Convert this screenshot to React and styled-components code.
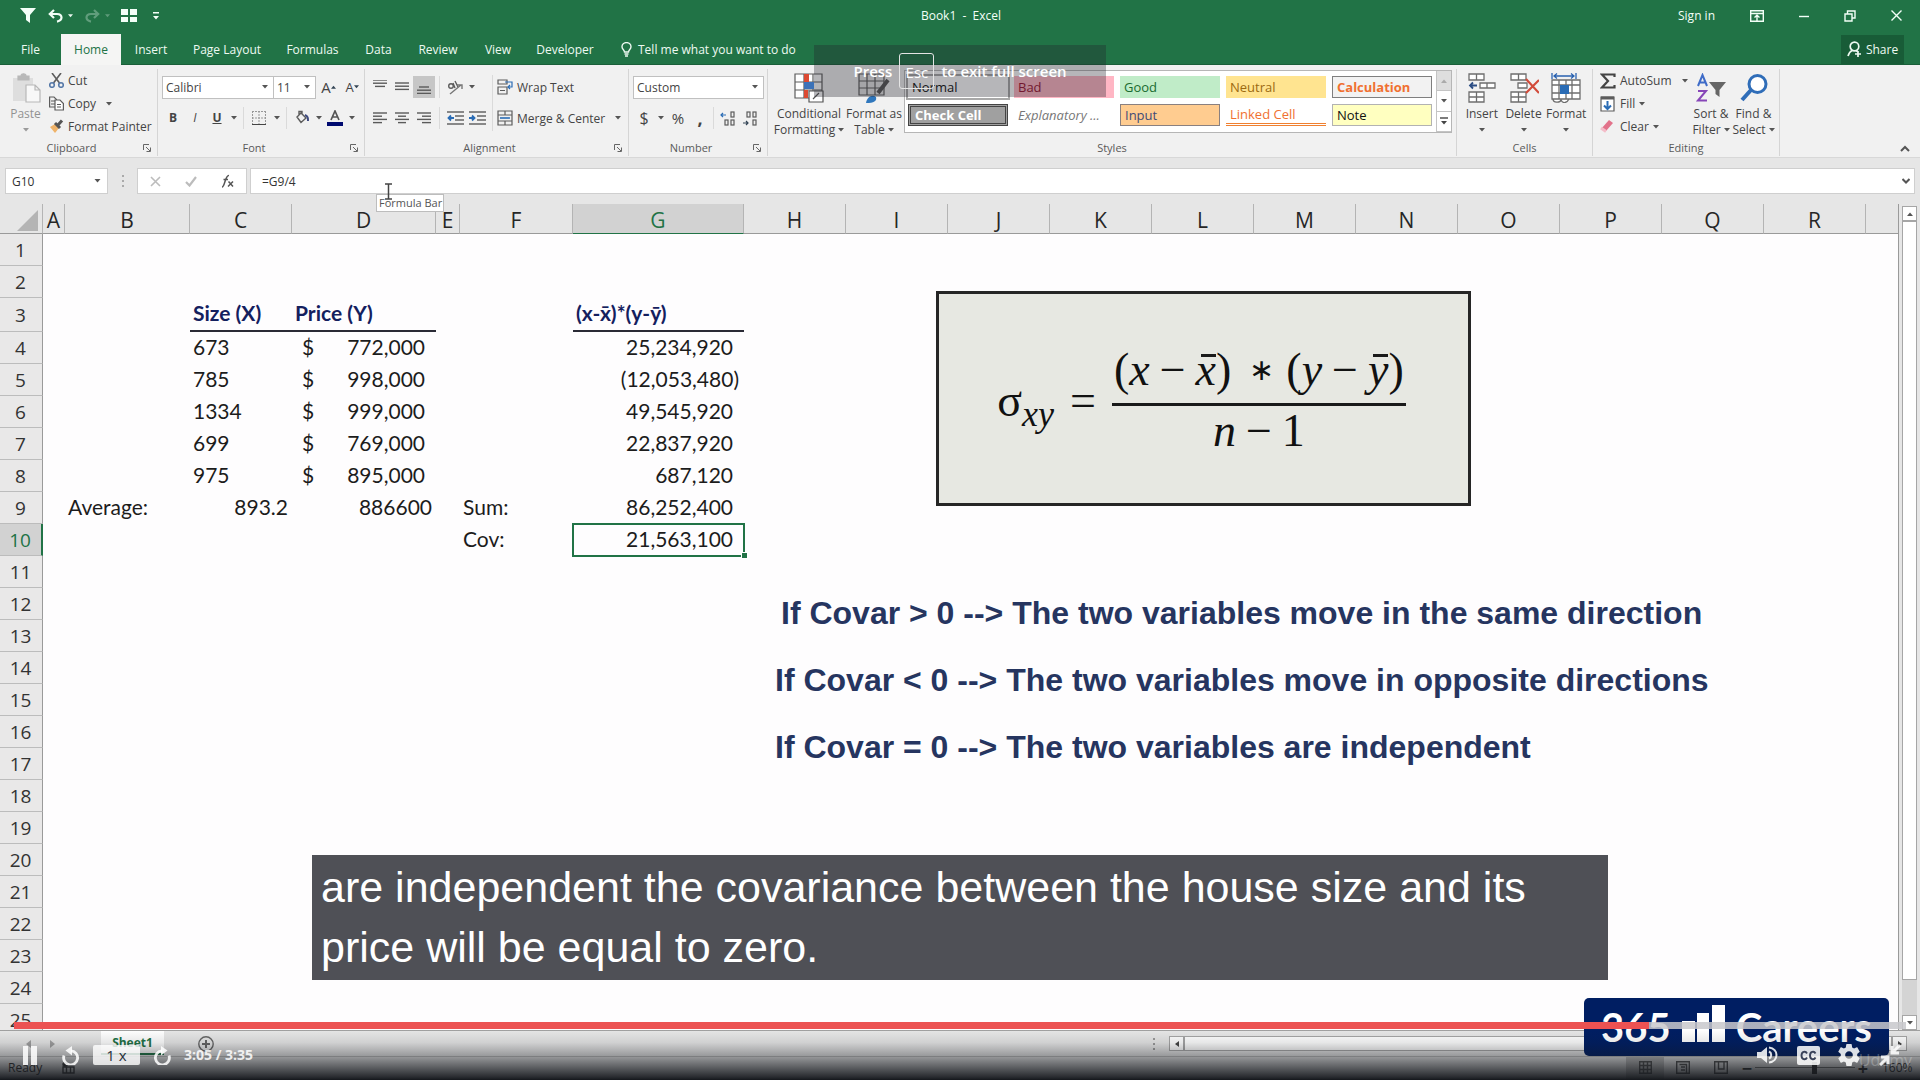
import React from "react";
import styled, { createGlobalStyle, css } from "styled-components";

const GREEN = "#217346";
const UI = '"Open Sans", "Noto Sans", sans-serif';
const CELL = 'Lato, "Open Sans", sans-serif';

const Global = createGlobalStyle`
  * { box-sizing: border-box; }
  html, body { margin: 0; height: 100%; overflow: hidden; }
  body { font-family: ${UI}; font-size: 12px; color: #444; background: #e6e6e6; }
  #root { height: 100%; }
  button, select, input { font: inherit; color: inherit; margin: 0; padding: 0; }
  button { background: none; border: 0; white-space: nowrap; cursor: pointer; }
  a { color: inherit; text-decoration: none; }
  svg { display: block; flex: none; }
`;

/* ---------- Window frame ---------- */
const Screen = styled.div`
  position: relative;
  display: flex;
  flex-direction: column;
  height: 100vh;
  overflow: hidden;
`;
const TitleBar = styled.header`
  display: grid;
  grid-template-columns: 1fr auto 1fr;
  align-items: center;
  height: 34px;
  padding: 0 18px 3px 20px;
  background: ${GREEN};
  color: #f3fff8;
`;
const QuickAccess = styled.div`
  display: flex;
  align-items: center;
  gap: 11px;
`;
const QuickPair = styled.div`
  display: flex;
  align-items: center;
  gap: 5px;
  opacity: ${(p) => (p.$dim ? 0.3 : 1)};
`;
const QuickButton = styled.button`
  display: flex;
  align-items: center;
  justify-content: center;
  min-width: 16px;
`;
const WindowTools = styled.div`
  display: flex;
  align-items: center;
  justify-content: flex-end;
  gap: 35px;
`;
const Tabs = styled.nav`
  display: flex;
  align-items: stretch;
  height: 31px;
  padding-right: 16px;
  background: ${GREEN};
  border-bottom: 1px solid #1a5f39;
  color: #eefaf2;
`;
const Tab = styled.a`
  display: flex;
  align-items: center;
  justify-content: center;
  width: ${(p) => p.$w}px;
  white-space: nowrap;
  ${(p) => p.$active && css`
    background: #f5f5f4;
    color: ${GREEN};
    margin-bottom: -1px;
  `}
`;
const TellMe = styled.button`
  display: flex;
  align-items: center;
  gap: 6px;
  padding-left: 16px;
`;
const Share = styled.button`
  display: flex;
  align-items: center;
  justify-content: center;
  gap: 4px;
  width: 63px;
  margin: 1px 0 0 auto;
  background: #185c37;
`;

/* ---------- Ribbon ---------- */
const Ribbon = styled.section`
  display: flex;
  height: 93px;
  padding: 4px 0 1px;
  background: #f1f1f1;
  border-bottom: 1px solid #d8d8d8;
`;
const Group = styled.section`
  display: flex;
  flex-direction: column;
  width: ${(p) => p.$w}px;
  border-right: 1px solid #d5d5d5;
`;
const GroupBody = styled.div`
  display: flex;
  flex: 1;
  padding: 0 ${(p) => p.$pr ?? 4}px 0 ${(p) => p.$pl ?? 4}px;
  gap: ${(p) => p.$gap ?? 0}px;
`;
const GroupFoot = styled.footer`
  display: grid;
  grid-template-columns: ${(p) => (p.$launch ? "1fr 14px" : "1fr")};
  align-items: center;
  height: 16px;
  font-size: 11px;
  line-height: 16px;
  text-align: center;
  color: #5a5a5a;
`;
const Rows = styled.div`
  display: flex;
  flex-direction: column;
  flex: ${(p) => (p.$grow ? 1 : "none")};
  padding-top: ${(p) => p.$top ?? 0}px;
  gap: ${(p) => p.$gap ?? 0}px;
`;
const Line = styled.div`
  display: flex;
  align-items: center;
  height: 22px;
`;
const Tool = styled.button`
  display: flex;
  align-items: center;
  justify-content: center;
  width: ${(p) => p.$w ?? 22}px;
  height: 22px;
  background: ${(p) => (p.$on ? "#c6c6c6" : "none")};
  font-size: ${(p) => p.$size ?? 12}px;
  font-weight: ${(p) => (p.$bold ? 700 : 400)};
  font-style: ${(p) => (p.$italic ? "italic" : "normal")};
  text-decoration: ${(p) => (p.$under ? "underline" : "none")};
  line-height: 22px;
`;
const TextTool = styled.button`
  display: flex;
  align-items: center;
  gap: 4px;
  height: ${(p) => p.$h ?? 23}px;
`;
const Divider = styled.i`
  width: 1px;
  height: ${(p) => p.$h ?? 22}px;
  margin: ${(p) => p.$mt ?? 0}px ${(p) => p.$m ?? 2}px 0;
  background: #dadada;
`;
const BigTool = styled.button`
  display: flex;
  flex-direction: column;
  align-items: center;
  width: ${(p) => p.$w}px;
  line-height: 16px;
  opacity: ${(p) => (p.$dim ? 0.55 : 1)};
`;
const BigIcon = styled.span`
  display: flex;
  align-items: center;
  justify-content: center;
  height: 37px;
`;
const BigLine = styled.span`
  display: flex;
  align-items: center;
  justify-content: center;
  gap: 3px;
  height: 16px;
`;
const Picker = styled.label`
  display: flex;
  align-items: center;
  width: ${(p) => p.$w}px;
  height: 23px;
  padding-right: 5px;
  margin-left: ${(p) => (p.$join ? -1 : 0)}px;
  background: #fff;
  border: 1px solid #c0c0c0;
  select {
    flex: 1;
    min-width: 0;
    padding-left: 3px;
    border: 0;
    background: none;
    appearance: none;
    outline: 0;
  }
`;
const Gallery = styled.div`
  display: flex;
  height: 63px;
  margin: 1px 0 0 0;
  background: #fff;
  border: 1px solid #b6b6b6;
`;
const Swatches = styled.div`
  display: grid;
  grid-template-columns: repeat(5, 100px);
  grid-auto-rows: 22px;
  gap: 6px;
  padding: 5px 4px 5px 3px;
`;
const Swatch = styled.button`
  padding-left: 4px;
  text-align: left;
  line-height: 16px;
  font-size: 13px;
  background: ${(p) => p.$bg ?? "#fff"};
  color: ${(p) => p.$fg ?? "#111"};
  border: ${(p) => p.$bd ?? "0"};
  font-weight: ${(p) => (p.$bold ? 700 : 400)};
  font-style: ${(p) => (p.$italic ? "italic" : "normal")};
  outline: ${(p) => (p.$current ? "2px solid #a8a8a8" : "0")};
  ${(p) => p.$under && css`border-bottom: 3px double #f08030;`}
`;
const GalleryScroll = styled.div`
  display: grid;
  grid-template-rows: repeat(3, 1fr);
  width: 15px;
  button {
    display: flex;
    align-items: center;
    justify-content: center;
    border: 1px solid #c4c4c4;
    border-width: 0 0 1px 1px;
  }
  button:first-child { background: #dedede; }
`;
const RibbonEnd = styled.div`
  display: flex;
  flex: 1;
  align-items: flex-end;
  justify-content: flex-end;
  padding: 0 10px 4px 0;
`;

/* ---------- Formula bar ---------- */
const FormulaRow = styled.div`
  display: flex;
  align-items: stretch;
  height: 46px;
  padding: 10px 5px 10px 5px;
  background: #e6e6e6;
`;
const Box = styled.div`
  display: flex;
  align-items: center;
  background: #fff;
  border: 1px solid #cfcfcf;
  width: ${(p) => (p.$w ? p.$w + "px" : "auto")};
  flex: ${(p) => (p.$w ? "none" : 1)};
  padding: 0 ${(p) => p.$pr ?? p.$px ?? 6}px 0 ${(p) => p.$px ?? 6}px;
  justify-content: ${(p) => (p.$spread ? "space-between" : "normal")};
  input {
    flex: 1;
    min-width: 0;
    border: 0;
    background: none;
    outline: 0;
    color: #333;
  }
`;
const Grip = styled.div`
  display: flex;
  align-items: center;
  justify-content: center;
  width: ${(p) => p.$w}px;
`;

/* ---------- Sheet ---------- */
const SheetArea = styled.main`
  position: relative;
  display: flex;
  flex: 1;
  min-height: 0;
  overflow: hidden;
`;
const Viewport = styled.div`
  flex: 1;
  min-width: 0;
  overflow: hidden;
  background: #fefdfe;
  border-right: 1px solid #9a9a9a;
`;
const Grid = styled.table`
  width: 100%;
  table-layout: fixed;
  border-collapse: separate;
  border-spacing: 0;
  font-family: ${CELL};
  font-size: 21px;
  line-height: 26px;
  color: #1c1c1c;
  th, td { padding: 0; white-space: nowrap; }
`;
const ColHead = styled.th`
  height: 30px;
  && { padding-top: 3px; }
  font: 400 21px/26px ${UI};
  color: ${(p) => (p.$on ? GREEN : "#262626")};
  background: ${(p) => (p.$on ? "#d2d2d2" : "#e6e6e6")};
  border-right: 1px solid #b4b4b4;
  border-bottom: 1px solid ${(p) => (p.$on ? GREEN : "#9a9a9a")};
  &:last-child { border-right: 0; }
  svg { margin-left: auto; margin-right: 4px; }
`;
const RowHead = styled.th`
  height: ${(p) => p.$h}px;
  && { padding-right: 1px; }
  font: 400 19px/28px ${UI};
  color: ${(p) => (p.$on ? GREEN : "#333")};
  background: ${(p) => (p.$on ? "#d2d2d2" : "#e9e8e8")};
  border-right: ${(p) => (p.$on ? `2px solid ${GREEN}` : "1px solid #9a9a9a")};
  border-bottom: 1px solid #bcbcbc;
`;
const Cell = styled.td`
  position: relative;
  && { padding: ${(p) => (p.$kind === "number" ? "0 11px 2px 3px" : p.$kind === "paren" ? "0 5px 2px 3px" : "0 4px 2px 3px")}; }
  text-align: ${(p) => (p.$kind ? "right" : "left")};
  ${(p) => p.$head && css`
    font-weight: 700;
    color: #14205e;
    border-bottom: 2px solid #2a2a35;
  `}
  ${(p) => p.$active && css`
    outline: 2px solid ${GREEN};
    outline-offset: -1px;
    &::after {
      content: "";
      position: absolute;
      right: -3px;
      bottom: -2px;
      width: 5px;
      height: 5px;
      background: ${GREEN};
      outline: 1px solid #fff;
    }
  `}
`;
const Money = styled.span`
  display: flex;
  justify-content: space-between;
  padding-left: 7px;
`;
const VScroll = styled.div`
  display: flex;
  flex-direction: column;
  width: 21px;
  padding: 2px 3px 0;
  background: #e6e6e6;
`;
const ScrollButton = styled.button`
  display: flex;
  align-items: center;
  justify-content: center;
  width: 15px;
  height: 15px;
  flex: none;
  background: #fff;
  border: 1px solid #a6a6a6;
`;
const VTrack = styled.div`
  flex: 1;
  padding-bottom: 35px;
  background: #d4d4d4;
`;
const Thumb = styled.div`
  flex: 1;
  height: 100%;
  background: #fff;
  border: 1px solid #a6a6a6;
`;

/* ---------- Drawing objects on the sheet ---------- */
const EquationBox = styled.figure`
  position: absolute;
  left: 936px;
  top: 87px;
  display: flex;
  align-items: center;
  justify-content: center;
  gap: 16px;
  width: 535px;
  height: 215px;
  margin: 0;
  padding: 4px 4px 0 0;
  background: #e7e8e2;
  border: 3px solid #262626;
  font: 46px/50px "Liberation Serif", serif;
  color: #111;
`;
const Sigma = styled.span`
  sub {
    font-size: 36px;
    line-height: 20px;
    font-style: italic;
    vertical-align: -10px;
  }
`;
const Fraction = styled.span`
  display: flex;
  flex-direction: column;
  align-items: center;
`;
const Numerator = styled.span`
  display: flex;
  gap: 12px;
  padding: 0 2px 8px;
  border-bottom: 3px solid #1a1a1a;
`;
const Barred = styled.i`
  position: relative;
  &::before {
    content: "";
    position: absolute;
    left: 5px;
    right: 0;
    top: 9px;
    height: 3px;
    background: #1a1a1a;
  }
`;
const Term = styled.span`
  display: flex;
`;
const Star = styled.span`
  padding-left: 6px;
  font-size: 30px;
`;
const Op = styled.span`
  padding: 0 10px;
`;
const Notes = styled.div`
  position: absolute;
  left: 775px;
  top: 376px;
  font: 700 32px/67px "Liberation Sans", Arial, sans-serif;
  color: #263560;
  white-space: nowrap;
  p { margin: 0; }
  p:first-child { padding-left: 6px; }
`;

/* ---------- Bottom bars ---------- */
const SheetTabs = styled.div`
  display: flex;
  align-items: center;
  height: 27px;
  background: #e6e6e6;
  border-top: 1px solid #a0a0a0;
  border-bottom: 1px solid #bdbdbd;
`;
const SheetNav = styled.div`
  display: flex;
  width: 101px;
  padding-left: 26px;
  gap: 19px;
  color: #a0a0a0;
`;
const SheetTab = styled.button`
  align-self: flex-start;
  width: 63px;
  height: 24px;
  font-weight: 700;
  color: ${GREEN};
  background: #fff;
  border-bottom: 2px solid ${GREEN};
`;
const AddSheet = styled.button`
  padding-left: 34px;
`;
const HScroll = styled.div`
  display: flex;
  width: 738px;
  height: 15px;
  margin-right: 13px;
`;
const StatusBar = styled.footer`
  display: flex;
  align-items: center;
  height: 23px;
  padding: 0 8px 2px;
  gap: 20px;
  background: #e6e6e6;
  color: #333;
`;
const StatusRight = styled.div`
  display: flex;
  align-items: center;
  margin-left: auto;
  height: 100%;
`;
const ViewButton = styled.button`
  display: flex;
  align-items: center;
  justify-content: center;
  width: 38px;
  height: 22px;
  background: ${(p) => (p.$on ? "#bdbdbd" : "none")};
`;
const ZoomButton = styled.button`
  width: 14px;
  font-size: 18px;
  line-height: 18px;
  font-weight: 700;
`;
const ZoomRange = styled.input`
  width: 100px;
  height: 12px;
  margin: 0 1px;
  appearance: none;
  background: linear-gradient(#777, #777) center / 100% 1px no-repeat;
  &::-webkit-slider-thumb {
    appearance: none;
    width: 5px;
    height: 12px;
    background: #333;
  }
`;
const ZoomText = styled.span`
  width: 42px;
  padding-left: 12px;
  white-space: nowrap;
`;

/* ---------- Overlays ---------- */
const Toast = styled.div`
  position: absolute;
  left: 50%;
  top: 45px;
  display: flex;
  align-items: center;
  justify-content: center;
  gap: 7px;
  width: 292px;
  height: 52px;
  margin-left: -146px;
  background: rgba(34, 34, 42, 0.33);
  color: #fff;
  font: 600 15px/20px ${UI};
  kbd {
    width: 35px;
    height: 36px;
    border: 1px solid #e4e4e4;
    border-radius: 3px;
    font: 400 15px/36px ${UI};
    text-align: center;
  }
`;
const Tip = styled.div`
  position: absolute;
  left: 376px;
  top: 194px;
  width: 68px;
  height: 18px;
  padding-left: 2px;
  overflow: hidden;
  background: #fff;
  border: 1px solid #bdbdbd;
  font-size: 11px;
  line-height: 16px;
  white-space: nowrap;
  color: #555;
`;
const Pointer = styled.svg`
  position: absolute;
  left: 384px;
  top: 183px;
`;
const Caption = styled.p`
  position: absolute;
  left: 312px;
  right: 312px;
  bottom: 100px;
  margin: 0;
  padding: 2px 9px 3px;
  background: rgba(66, 67, 73, 0.93);
  color: #fff;
  font: 43px/60px "Liberation Sans", Arial, sans-serif;
`;
const Brand = styled.div`
  position: absolute;
  right: 31px;
  bottom: 24px;
  display: flex;
  align-items: center;
  justify-content: center;
  gap: 11px;
  width: 305px;
  height: 58px;
  background: #001e62;
  border-radius: 5px;
  color: #fff;
  font: 700 40px/58px Lato, sans-serif;
  svg { margin-bottom: 8px; }
`;
const Player = styled.div`
  position: absolute;
  left: 0;
  right: 0;
  bottom: 0;
  height: 58px;
`;
const Shade = styled.div`
  position: absolute;
  inset: 8px 0 0;
  background: linear-gradient(rgba(20, 23, 28, 0), rgba(20, 23, 28, 0.1) 25%, rgba(20, 23, 28, 0.4) 55%, rgba(20, 23, 28, 0.9) 94%, rgb(20, 23, 28));
`;
const Seek = styled.input`
  position: relative;
  display: block;
  width: calc(100% - 28px);
  height: 7px;
  margin: 0 14px !important;
  appearance: none;
  background: linear-gradient(90deg, #ec5252 ${(p) => p.$at}%, rgba(200, 200, 204, 0.85) ${(p) => p.$at}%);
  &::-webkit-slider-thumb {
    appearance: none;
    width: 1px;
    height: 7px;
    background: transparent;
  }
`;
const Controls = styled.div`
  position: relative;
  display: flex;
  align-items: center;
  height: 51px;
  padding: 14px 18px 13px 23px;
  color: rgba(255, 255, 255, 0.86);
  font: 700 14px/20px ${UI};
`;
const PlayerLeft = styled.div`
  display: flex;
  align-items: center;
  gap: 13px;
`;
const PlayerRight = styled.div`
  display: flex;
  align-items: center;
  gap: 17px;
  margin-left: auto;
`;
const IconButton = styled.button`
  display: flex;
  width: ${(p) => p.$w}px;
  justify-content: center;
  margin-right: ${(p) => p.$mr ?? 0}px;
`;
const Speed = styled.button`
  width: 47px;
  height: 20px;
  border-radius: 2px;
  background: rgba(255, 255, 255, 0.8);
  color: #29303b;
  font: 400 15px/18px ${UI};
`;
const Watermark = styled.span`
  position: absolute;
  right: 8px;
  bottom: 10px;
  font-size: 16px;
  line-height: 20px;
  color: rgba(255, 255, 255, 0.25);
`;

/* ---------- Icons ---------- */
const Caret = ({ up, c = "#555", w = 6 }) => (
  <svg width={w} height="4" viewBox="0 0 6 4"><path d={up ? "M0 4L3 0.5L6 4z" : "M0 0L3 3.5L6 0z"} fill={c} /></svg>
);
const Svg = ({ w = 16, h, vb, c = "#5c5c5c", sw = 1.4, children }) => (
  <svg width={w} height={h ?? w} viewBox={vb ?? `0 0 ${w} ${h ?? w}`} fill="none" stroke={c} strokeWidth={sw}>{children}</svg>
);
const Launcher = () => (
  <Svg w={8} c="#666" sw={1}><path d="M.5 6V.5H6M3 3l4 4M7.500 3.500v4h-4" /></Svg>
);
const AlignIcon = ({ rows, y = 0 }) => (
  <Svg w={14} c="#5a5a5a" sw={1.4}>
    {rows.map(([x1, x2], i) => <path key={i} d={`M${x1} ${y + 2 + i * 3.2}H${x2}`} />)}
  </Svg>
);
const IndentIcon = ({ right }) => (
  <Svg w={17} h={14} c="#666" sw={1.3}>
    <path d="M0 1H17M8 5H17M8 9H17M0 13H17" />
    <path d={right ? "M0 7H5M3 4.500L5.500 7L3 9.500" : "M1.500 7H7M4 4.500L1.500 7L4 9.500"} stroke="#2a6cb5" strokeWidth="1.800" />
  </Svg>
);
const Undo = ({ flip }) => (
  <svg width="15" height="14" viewBox="0 0 15 14" fill="none" stroke="currentColor" strokeWidth="2.200">
    <g transform={flip ? "translate(15 0) scale(-1 1)" : undefined}>
      <path d="M6 1L1.800 5L6 9M2 5H9C12 5 13.500 6.500 13.500 8.600C13.500 11 12 12 9 12.600" />
    </g>
  </svg>
);
const CellBlocks = ({ kind }) => (
  <Svg w={30} h={30} c="#6e6e6e" sw={1.3}>
    {kind === "format" ? (
      <>
        <path d="M1 7H29V26H1zM1 12H29M1 20H29M8 7V26M21 7V26M15 7V26M2 26c0 4 7 4 8 1c2 4 6 3 8-1" fill="#fff" />
        <rect x="9" y="12" width="9" height="9" fill="#2a6cb5" stroke="none" />
        <path d="M1 0V6M25 0V6M3 3H23M6 0.500L3 3L6 5.500M20 .5L23 3L20 5.500" stroke="#2a62b0" />
      </>
    ) : (
      <>
        <path d="M2 1H17V7H2zM9.500 1V7M2 19H17V29H2zM9.500 19V29M2 24H17" fill="#fff" />
        {kind === "insert" ? (
          <>
            <path d="M13 10H28V15H13zM20 10V15" fill="#fff" />
            <path d="M10 12.500H3M6 9.500L3 12.500L6 15.500" stroke="#2b4d84" strokeWidth="1.800" />
          </>
        ) : (
          <>
            <path d="M9 10H18V15H9z" fill="#fff" />
            <path d="M17 6L30 20M30 7L17 20" stroke="#d24b3a" strokeWidth="2.200" />
          </>
        )}
      </>
    )}
  </Svg>
);
const Rotate = ({ flip }) => (
  <svg width="18" height="20" viewBox="0 0 18 20">
    <g transform={flip ? "translate(18 0) scale(-1 1)" : undefined}>
      <path d="M2 10.500A7 7 0 1 0 9 5.800" fill="none" stroke="currentColor" strokeWidth="2.800" />
      <path d="M10 1V10.500L3.500 5.500z" fill="currentColor" />
    </g>
  </svg>
);

/* ---------- Data ---------- */
const columns = [
  ["A", 22], ["B", 125], ["C", 102], ["D", 144], ["E", 24], ["F", 113], ["G", 171],
  ["H", 102], ["I", 102], ["J", 102], ["K", 102], ["L", 102], ["M", 102], ["N", 102],
  ["O", 102], ["P", 102], ["Q", 102], ["R", 102],
];
const money = (v) => ({ v, kind: "number", money: true });
const num = (v) => ({ v, kind: "number" });
const cells = {
  C3: { v: "Size (X)", head: true }, D3: { v: "Price (Y)", head: true }, G3: { v: "(x-x̄)*(y-ȳ)", head: true },
  C4: { v: "673" }, D4: money("772,000"), G4: num("25,234,920"),
  C5: { v: "785" }, D5: money("998,000"), G5: { v: "(12,053,480)", kind: "paren" },
  C6: { v: "1334" }, D6: money("999,000"), G6: num("49,545,920"),
  C7: { v: "699" }, D7: money("769,000"), G7: num("22,837,920"),
  C8: { v: "975" }, D8: money("895,000"), G8: num("687,120"),
  B9: { v: "Average:" }, C9: { v: "893.2", kind: "plain" }, D9: { v: "886600", kind: "plain" },
  F9: { v: "Sum:" }, G9: num("86,252,400"),
  F10: { v: "Cov:" }, G10: { ...num("21,563,100"), active: true },
};
const tabs = [["File", 61], ["Home", 60, true], ["Insert", 60], ["Page Layout", 92], ["Formulas", 79], ["Data", 53], ["Review", 66], ["View", 54], ["Developer", 80]];
const swatches = [
  { t: "Normal", $current: true }, { t: "Bad", $bg: "#ffb6c4", $fg: "#9c1432" }, { t: "Good", $bg: "#c0ecc8", $fg: "#1a6b30" },
  { t: "Neutral", $bg: "#ffe490", $fg: "#9c6a10" }, { t: "Calculation", $bg: "#f2f2f2", $fg: "#f07030", $bd: "1px solid #7f7f7f", $bold: true },
  { t: "Check Cell", $bg: "#a0a0a0", $fg: "#fff", $bd: "3px double #444", $bold: true },
  { t: "Explanatory ...", $fg: "#777", $italic: true }, { t: "Input", $bg: "#ffcc90", $fg: "#3f4a76", $bd: "1px solid #8a8080" },
  { t: "Linked Cell", $fg: "#f07030", $under: true }, { t: "Note", $bg: "#ffffc0", $bd: "1px solid #b2b2b2" },
];

const Foot = ({ children, launch }) => (
  <GroupFoot $launch={launch}>
    <span>{children}</span>
    {launch && <button aria-label={`${children} settings`}><Launcher /></button>}
  </GroupFoot>
);

function RibbonBar() {
  return (
    <Ribbon>
      <Group $w={158}>
        <GroupBody $pl={9} $gap={7}>
          <BigTool $w={33} $dim>
            <BigIcon>
              <Svg w={30} h={30} c="#8a8a8a" sw={1.2}>
                <path d="M2 5H22V28H2z" fill="#d0d0d0" stroke="none" />
                <path d="M7 7V3H10C10 0 15 0 15 3H18V7z" fill="#8a8a8a" />
                <path d="M15 12H24L29 17V29H15zM24 12V17H29" fill="#fff" />
              </Svg>
            </BigIcon>
            <BigLine>Paste</BigLine><BigLine><Caret /></BigLine>
          </BigTool>
          <Rows>
            <TextTool>
              <Svg w={15} h={15} sw={1.6}><path d="M3 0L10.500 10M12 0L4.500 10" /><circle cx="3" cy="12" r="2.300" stroke="#5679a8" /><circle cx="12" cy="12" r="2.300" stroke="#5679a8" /></Svg>Cut
            </TextTool>
            <TextTool>
              <Svg w={15} h={15} sw={1.2}><path d="M.6 1H5L7.500 3.500V11H.6zM2 5H6M2 8H6" /><path d="M6 4H11L14.400 7.500V14H6zM8 8.500H12M8 11H12" fill="#fff" /></Svg>Copy&nbsp;&nbsp;<Caret />
            </TextTool>
            <TextTool>
              <Svg w={15} h={15}><path d="M1 8L6 5L10 9L6 14z" fill="#efb36a" stroke="none" /><path d="M6 4L11 9M8.500 6.500L13 1.500" strokeWidth="3" stroke="#555" /></Svg>Format Painter
            </TextTool>
          </Rows>
        </GroupBody>
        <Foot launch>Clipboard</Foot>
      </Group>

      <Group $w={207}>
        <GroupBody>
          <Rows $top={7} $gap={9}>
            <Line>
              <Picker $w={112}><select aria-label="Font"><option>Calibri</option></select><Caret /></Picker>
              <Picker $w={43} $join><select aria-label="Font size"><option>11</option></select><Caret /></Picker>
              <Tool $w={25} $size={15} aria-label="Increase font size">A<sup><Caret up c="#345" w={5} /></sup></Tool>
              <Tool $w={22} $size={13} aria-label="Decrease font size">A<sup><Caret c="#345" w={5} /></sup></Tool>
            </Line>
            <Line>
              <Tool $bold>B</Tool><Tool $italic>I</Tool><Tool $under $bold>U</Tool><Tool $w={12} aria-label="Underline style"><Caret /></Tool>
              <Divider $m={3} />
              <Tool $w={24} aria-label="Borders"><Svg w={14} c="#999" sw={1}><path d="M.5 0V13M13.500 0V13M7 0V13M0 .5H14M0 7H14" strokeDasharray="2 1" /><path d="M0 13.500H14" stroke="#444" /></Svg></Tool>
              <Tool $w={11} aria-label="Border style"><Caret /></Tool>
              <Divider $m={4} />
              <Tool aria-label="Fill colour"><Svg w={16}><path d="M3 7L7 3L12 8L7 12.500zM5 5V1.500H8V4" /><path d="M11 5c3 1 3 3 3 6" stroke="#3f4b80" strokeWidth="2" /></Svg></Tool>
              <Tool $w={11} aria-label="Fill colours"><Caret /></Tool>
              <Tool aria-label="Font colour"><Svg w={16} h={16}><path d="M4 10L8 1L12 10M5.500 7H10.500" stroke="#555" strokeWidth="1.700" /><path d="M0 14H16" stroke="#000a70" strokeWidth="4" /></Svg></Tool>
              <Tool $w={11} aria-label="Font colours"><Caret /></Tool>
            </Line>
          </Rows>
        </GroupBody>
        <Foot launch>Font</Foot>
      </Group>

      <Group $w={264}>
        <GroupBody $gap={4}>
          <Rows $top={7} $gap={9}>
            <Line>
              <Tool aria-label="Top align"><AlignIcon y={-2} rows={[[0, 14], [0, 14], [2, 12]]} /></Tool>
              <Tool aria-label="Middle align"><AlignIcon y={1} rows={[[0, 14], [0, 14], [0, 14]]} /></Tool>
              <Tool $on aria-label="Bottom align"><AlignIcon y={5} rows={[[2, 12], [0, 14], [0, 14]]} /></Tool>
              <Divider $m={4} />
              <Tool aria-label="Orientation"><Svg w={16}><circle cx="4" cy="7" r="2.300" /><path d="M6 4L8 9M8 2L11 8" /><path d="M3 15L14 6M10 6H15V10" stroke="#777" /></Svg></Tool>
              <Tool $w={11} aria-label="Orientations"><Caret /></Tool>
            </Line>
            <Line>
              <Tool aria-label="Align left"><AlignIcon rows={[[0, 14], [0, 9], [0, 14], [0, 9]]} /></Tool>
              <Tool aria-label="Centre"><AlignIcon rows={[[0, 14], [3, 11], [0, 14], [3, 11]]} /></Tool>
              <Tool aria-label="Align right"><AlignIcon rows={[[0, 14], [5, 14], [0, 14], [5, 14]]} /></Tool>
              <Divider $m={4} />
              <Tool aria-label="Decrease indent"><IndentIcon /></Tool>
              <Tool aria-label="Increase indent"><IndentIcon right /></Tool>
            </Line>
          </Rows>
          <Divider $h={56} $mt={6} $m={0} />
          <Rows $top={7} $gap={9}>
            <TextTool $h={22}>
              <Svg w={16} h={16} sw={1.2}><path d="M1 1H10V5H1zM1 8H10V15H1zM3 11.500H8" /><path d="M8 3H15V8H11M13 6L11 8L13 10" stroke="#2a6cb5" /></Svg>Wrap Text
            </TextTool>
            <TextTool $h={22}>
              <Svg w={16} h={16} sw={1.2}><path d="M1 1H15V15H1zM1 5H15M8 1V5M1 11H15M8 11V15" /><path d="M3 8H13" stroke="#2a6cb5" strokeWidth="1.600" /></Svg>Merge &amp; Center&nbsp;&nbsp;<Caret />
            </TextTool>
          </Rows>
        </GroupBody>
        <Foot launch>Alignment</Foot>
      </Group>

      <Group $w={139}>
        <GroupBody>
          <Rows $top={7} $gap={9}>
            <Line><Picker $w={131}><select aria-label="Number format"><option>Custom</option></select><Caret /></Picker></Line>
            <Line>
              <Tool $size={16}>$</Tool><Tool $w={11} aria-label="Currencies"><Caret /></Tool>
              <Tool $w={24} $size={15}>%</Tool><Tool $w={20} $size={18} $bold>,</Tool>
              <Divider $m={3} />
              <Tool aria-label="Increase decimal"><Svg w={16} h={15} sw={1.2}><path d="M1 4H6M3 2L1 4L3 6" stroke="#2a6cb5" /><rect x="11" y="1" width="3" height="5" /><rect x="5" y="9" width="3" height="5" /><rect x="11" y="9" width="3" height="5" /></Svg></Tool>
              <Tool aria-label="Decrease decimal"><Svg w={16} h={15} sw={1.2}><rect x="5" y="1" width="3" height="5" /><rect x="11" y="1" width="3" height="5" /><path d="M1 12H6M4 10L6 12L4 14" stroke="#345" /><rect x="11" y="9" width="3" height="5" /></Svg></Tool>
            </Line>
          </Rows>
        </GroupBody>
        <Foot launch>Number</Foot>
      </Group>

      <Group $w={689}>
        <GroupBody $pl={6}>
          <BigTool $w={70}>
            <BigIcon>
              <Svg w={30} h={30} sw={1.2}>
                <path d="M1 1H28V25H1zM10 1V25M19 1V25M1 9H28M1 17H28" fill="#fff" />
                <path d="M10 1H15V9H10zM10 17H14V25H10z" fill="#dc4a32" stroke="none" /><path d="M10 9H20V16H10z" fill="#3c72b8" stroke="none" />
                <path d="M15 18H29V29H15zM19 26L25 20" fill="#fff" stroke="#555" />
              </Svg>
            </BigIcon>
            <BigLine>Conditional</BigLine><BigLine>Formatting<Caret /></BigLine>
          </BigTool>
          <BigTool $w={60}>
            <BigIcon>
              <Svg w={32} h={30} sw={1.2}>
                <path d="M1 1H26V22H1zM1 8H26M1 15H26M9 1V22M17 1V22" fill="#e6e6e6" />
                <path d="M30 7L20 20" strokeWidth="4" stroke="#555" /><path d="M8 30C9 24 14 21 18 24C19 28 16 30 8 30z" fill="#2f77bd" stroke="none" />
              </Svg>
            </BigIcon>
            <BigLine>Format as</BigLine><BigLine>Table<Caret /></BigLine>
          </BigTool>
          <Gallery>
            <Swatches>{swatches.map(({ t, ...s }) => <Swatch key={t} {...s}>{t}</Swatch>)}</Swatches>
            <GalleryScroll>
              <button aria-label="Previous styles"><Caret up c="#aaa" /></button>
              <button aria-label="Next styles"><Caret /></button>
              <button aria-label="More styles"><Svg w={8} h={8} c="#444"><path d="M0 1H8" /><path d="M1 4H7L4 7.500z" fill="#444" stroke="none" /></Svg></button>
            </GalleryScroll>
          </Gallery>
        </GroupBody>
        <Foot>Styles</Foot>
      </Group>

      <Group $w={136}>
        <GroupBody $pl={4}>
          {[["Insert", 42], ["Delete", 42], ["Format", 44]].map(([t, w]) => (
            <BigTool key={t} $w={w}>
              <BigIcon><CellBlocks kind={t.toLowerCase()} /></BigIcon>
              <BigLine>{t}</BigLine><BigLine><Caret /></BigLine>
            </BigTool>
          ))}
        </GroupBody>
        <Foot>Cells</Foot>
      </Group>

      <Group $w={187}>
        <GroupBody $pl={7}>
          <Rows $grow>
            <TextTool><Svg w={16} c="#444" sw={2.2}><path d="M14.500 4V1.500H2L8 8L2 14.500H14.500V12" /></Svg>AutoSum&nbsp;&nbsp;<Caret /></TextTool>
            <TextTool><Svg w={16} h={16} sw={1.2}><path d="M1 1H14V15H1z" fill="#fff" /><path d="M1 2H14" strokeWidth="3" /><path d="M7.500 5V13M4 9.500L7.500 13L11 9.500" stroke="#2a6cb5" strokeWidth="2" /></Svg>Fill<Caret /></TextTool>
            <TextTool><Svg w={16}><path d="M1 10L9 1L13 4L6 12z" fill="#e2728a" stroke="none" /><path d="M1 9L6 12.500" stroke="#f4bcc8" strokeWidth="3" /></Svg>Clear<Caret /></TextTool>
          </Rows>
          <BigTool $w={42}>
            <BigIcon>
              <Svg w={30} h={30} sw={2}>
                <path d="M2 13L6.500 2L11 13M3.500 9.500H9.500" stroke="#3f6cc8" /><path d="M2 18H10L2 27.500H11" stroke="#8746b8" />
                <path d="M13 9H30L23.500 17V24L19.500 21V17z" fill="#666" stroke="none" />
              </Svg>
            </BigIcon>
            <BigLine>Sort &amp;</BigLine><BigLine>Filter<Caret /></BigLine>
          </BigTool>
          <BigTool $w={43}>
            <BigIcon><Svg w={28} h={28} c="#2f6db8" sw={3}><circle cx="17.500" cy="10" r="8.500" fill="#fff" /><path d="M11 16L2 26" strokeWidth="4" /></Svg></BigIcon>
            <BigLine>Find &amp;</BigLine><BigLine>Select<Caret /></BigLine>
          </BigTool>
        </GroupBody>
        <Foot>Editing</Foot>
      </Group>
      <RibbonEnd><button aria-label="Collapse ribbon"><Svg w={10} h={7} c="#555" sw={2}><path d="M1 6L5 2L9 6" /></Svg></button></RibbonEnd>
    </Ribbon>
  );
}

function Sheet() {
  const rows = Array.from({ length: 25 }, (_, i) => i + 1);
  return (
    <Viewport>
      <Grid>
        <colgroup>
          <col width="43" />
          {columns.map(([n, w]) => <col key={n} width={w} />)}
          <col />
        </colgroup>
        <thead>
          <tr>
            <ColHead aria-label="Select all"><svg width="21" height="21"><path d="M21 0V21H0z" fill="#b4b4b4" /></svg></ColHead>
            {columns.map(([n]) => <ColHead key={n} scope="col" $on={n === "G"}>{n}</ColHead>)}
            <ColHead />
          </tr>
        </thead>
        <tbody>
          {rows.map((r) => (
            <tr key={r}>
              <RowHead scope="row" $h={r === 3 ? 34 : 32} $on={r === 10}>{r}</RowHead>
              {columns.map(([n]) => {
                const c = cells[n + r] ?? {};
                return (
                  <Cell key={n} $kind={c.kind} $head={c.head} $active={c.active}>
                    {c.money ? <Money><span>$</span><span>{c.v}</span></Money> : c.v}
                  </Cell>
                );
              })}
              <Cell />
            </tr>
          ))}
        </tbody>
      </Grid>
    </Viewport>
  );
}

export default function App() {
  const played = 86.4;
  return (
    <Screen>
      <Global />
      <TitleBar>
        <QuickAccess>
          <QuickButton aria-label="Filter"><svg width="16" height="15"><path d="M0 0H16L10 7V15L6 12V7z" fill="currentColor" /></svg></QuickButton>
          <QuickPair><QuickButton aria-label="Undo"><Undo /></QuickButton><Caret c="#e8f5ee" w={5} /></QuickPair>
          <QuickPair $dim><QuickButton aria-label="Redo"><Undo flip /></QuickButton><Caret c="#e8f5ee" w={5} /></QuickPair>
          <QuickButton aria-label="Windows"><svg width="16" height="13"><path d="M0 0H7V6H0zM9 0H16V6H9zM0 8H7V13H0zM9 8H16V13H9z" fill="currentColor" /></svg></QuickButton>
          <QuickButton aria-label="Customise toolbar"><svg width="6" height="8"><path d="M0 0H6V1.500H0zM0 4H6L3 7.500z" fill="currentColor" /></svg></QuickButton>
        </QuickAccess>
        <span>Book1&nbsp; -&nbsp; Excel</span>
        <WindowTools>
          <a href="#signin">Sign in</a>
          <button aria-label="Ribbon display"><Svg w={14} h={12} c="currentColor"><path d="M.7 .7H13.300V11.300H.7zM.7 3.500H13.300M7 11V5.500M4.500 7.500L7 5.300L9.500 7.500" /></Svg></button>
          <button aria-label="Minimise"><Svg w={10} h={12} c="currentColor"><path d="M0 6.500H10" /></Svg></button>
          <button aria-label="Restore"><Svg w={12} c="currentColor"><path d="M1 4H8V11H1zM3.500 4V1H11V8H8" /></Svg></button>
          <button aria-label="Close"><Svg w={11} c="currentColor"><path d="M.5 .5L10.500 10.500M10.500 .5L.5 10.500" /></Svg></button>
        </WindowTools>
      </TitleBar>
      <Tabs>
        {tabs.map(([t, w, on]) => <Tab key={t} href={`#${t}`} $w={w} $active={on}>{t}</Tab>)}
        <TellMe>
          <Svg w={11} h={15} c="currentColor"><path d="M3.500 10C3.500 8 1 7.500 1 4.800A4.500 4.200 0 0 1 10 4.800C10 7.500 7.500 8 7.500 10zM3.500 12H7.500M4 14H7" /></Svg>
          Tell me what you want to do
        </TellMe>
        <Share><Svg w={15} h={17} c="currentColor" sw={1.7}><circle cx="7.500" cy="5.500" r="4.300" /><path d="M1 15C2 12 3 10.500 5 9.500M9 9.500L10.500 10.500M11 10V16M8 13H14" /></Svg>Share</Share>
      </Tabs>
      <RibbonBar />
      <FormulaRow>
        <Box $w={103}>
          <input aria-label="Name box" defaultValue="G10" /><Caret w={7} />
        </Box>
        <Grip $w={29}><svg width="2" height="12"><path d="M0 0H2V2H0zM0 5H2V7H0zM0 10H2V12H0z" fill="#aaa" /></svg></Grip>
        <Box $w={110} $spread $px={12}>
          <button aria-label="Cancel"><Svg w={11} c="#bcbcbc" sw={1.6}><path d="M1 1L10 10M10 1L1 10" /></Svg></button>
          <button aria-label="Enter"><Svg w={12} h={11} c="#bcbcbc" sw={2.2}><path d="M1 6L4.500 9.500L11 1" /></Svg></button>
          <button aria-label="Insert function"><Svg w={13} h={14} c="#555" sw={1.5}><path d="M1 13C4 13 4 1 8 1.500M2.500 5.500H7M7.500 7.500L12 12.500M12 7.500L7 12.500" /></Svg></button>
        </Box>
        <Grip $w={3} />
        <Box $px={11} $pr={4}>
          <input aria-label="Formula bar" defaultValue="=G9/4" />
          <button aria-label="Expand formula bar"><Svg w={8} h={6} c="#555" sw={2}><path d="M.5 1L4 4.500L7.500 1" /></Svg></button>
        </Box>
      </FormulaRow>
      <SheetArea>
        <Sheet />
        <VScroll>
          <ScrollButton aria-label="Scroll up"><Caret up /></ScrollButton>
          <VTrack><Thumb /></VTrack>
          <ScrollButton aria-label="Scroll down"><Caret /></ScrollButton>
        </VScroll>
        <EquationBox>
          <Sigma>σ<sub>xy</sub></Sigma>
          <span>=</span>
          <Fraction>
            <Numerator>
              <Term>(<i>x</i><Op>−</Op><Barred>x</Barred>)</Term>
              <Star>∗</Star>
              <Term>(<i>y</i><Op>−</Op><Barred>y</Barred>)</Term>
            </Numerator>
            <Term><i>n</i><Op>−</Op>1</Term>
          </Fraction>
        </EquationBox>
        <Notes>
          <p>If Covar &gt; 0 --&gt; The two variables move in the same direction</p>
          <p>If Covar &lt; 0 --&gt; The two variables move in opposite directions</p>
          <p>If Covar = 0 --&gt; The two variables are independent</p>
        </Notes>
      </SheetArea>
      <SheetTabs>
        <SheetNav>
          <button aria-label="Previous sheet"><svg width="5" height="8"><path d="M5 0V8L0 4z" fill="currentColor" /></svg></button>
          <button aria-label="Next sheet"><svg width="5" height="8"><path d="M0 0V8L5 4z" fill="currentColor" /></svg></button>
        </SheetNav>
        <SheetTab>Sheet1</SheetTab>
        <AddSheet aria-label="New sheet"><Svg w={16} c="#666"><circle cx="8" cy="8" r="7.200" /><path d="M8 4V12M4 8H12" strokeWidth="2" /></Svg></AddSheet>
        <RibbonEnd />
        <Grip $w={30}><svg width="2" height="12"><path d="M0 0H2V2H0zM0 5H2V7H0zM0 10H2V12H0z" fill="#999" /></svg></Grip>
        <HScroll>
          <ScrollButton aria-label="Scroll left"><svg width="4" height="6"><path d="M4 0V6L0 3z" fill="#444" /></svg></ScrollButton>
          <Thumb />
          <ScrollButton aria-label="Scroll right"><svg width="4" height="6"><path d="M0 0V6L4 3z" fill="#444" /></svg></ScrollButton>
        </HScroll>
      </SheetTabs>
      <StatusBar>
        <span>Ready</span>
        <Svg w={13} h={12} c="#444"><path d="M1 5H12V11H1zM4.500 5V11M8.500 5V11" /><circle cx="3" cy="2.500" r="2" fill="#333" /></Svg>
        <StatusRight>
          <ViewButton $on aria-label="Normal view"><Svg w={13} c="#555"><path d="M.7 .7H12.300V12.300H.7zM.7 4.500H12.300M.7 8.500H12.300M4.500 .7V12.300M8.500 .7V12.300" /></Svg></ViewButton>
          <ViewButton aria-label="Page layout view"><Svg w={14} h={13} c="#555"><path d="M.7 .7H13.300V12.300H.7zM3.500 3.500H10.500V12M5 6H9M5 9H9" /></Svg></ViewButton>
          <ViewButton aria-label="Page break view"><Svg w={14} h={13} c="#555"><path d="M.7 .7H13.300V12.300H.7zM4.500 .7V8H10V.7" /></Svg></ViewButton>
          <ZoomButton aria-label="Zoom out">−</ZoomButton>
          <ZoomRange type="range" aria-label="Zoom" defaultValue="60" />
          <ZoomButton aria-label="Zoom in">+</ZoomButton>
          <ZoomText>160%</ZoomText>
        </StatusRight>
      </StatusBar>

      <Tip role="tooltip">Formula Bar</Tip>
      <Pointer width="9" height="17" fill="none" stroke="#444" strokeWidth="1.500"><path d="M1 1H8M4.500 1V16M1 16H8" /></Pointer>
      <Toast role="status"><span>Press</span><kbd>Esc</kbd><span>to exit full screen</span></Toast>
      <Brand>
        <span>365</span>
        <svg width="43" height="37" fill="#fff"><path d="M0 16H13V37H0zM15 8H27V37H15zM30 0H43V37H30z" /></svg>
        <span>Careers</span>
      </Brand>
      <Caption>are independent the covariance between the house size and its price will be equal to zero.</Caption>
      <Player>
        <Shade />
        <Watermark>Udemy</Watermark>
        <Seek type="range" aria-label="Seek" step="0.1" defaultValue={played} $at={played} />
        <Controls>
          <PlayerLeft>
            <IconButton $w={14} $mr={12} aria-label="Pause"><svg width="14" height="19"><path d="M0 0H5V19H0zM8 0H14V19H8z" fill="currentColor" /></svg></IconButton>
            <IconButton $w={18} aria-label="Rewind"><Rotate /></IconButton>
            <Speed>1 x</Speed>
            <IconButton $w={18} aria-label="Forward"><Rotate flip /></IconButton>
            <span>3:05 / 3:35</span>
          </PlayerLeft>
          <PlayerRight>
            <IconButton $w={22} aria-label="Volume">
              <svg width="22" height="18" fill="none" stroke="currentColor" strokeWidth="2"><path d="M0 6H4L10 1V17L4 12H0z" fill="currentColor" stroke="none" /><path d="M12 5.500C15 7 15 11 12 12.500M12 1.500C22 3 22 15 12 16.500" /></svg>
            </IconButton>
            <IconButton $w={24} aria-label="Captions">
              <svg width="23" height="19"><rect width="23" height="19" rx="2" fill="currentColor" /><path d="M10 7.500C8.500 4.500 4.500 5.500 4.500 9.500S8.500 14.500 10 11.500M18.500 7.500C17 4.500 13 5.500 13 9.500S17 14.500 18.500 11.500" fill="none" stroke="#39425a" strokeWidth="1.900" /></svg>
            </IconButton>
            <IconButton $w={24} aria-label="Settings">
              <svg width="22" height="22" viewBox="2 2 20 20"><path fill="currentColor" d="M19.430 12.980c.04-.32.07-.64.07-.98s-.03-.66-.07-.98l2.110-1.650c.19-.15.24-.42.12-.64l-2-3.460c-.12-.22-.39-.3-.61-.22l-2.490 1c-.52-.4-1.080-.73-1.690-.98l-.38-2.650C14.460 2.180 14.250 2 14 2h-4c-.25 0-.46.18-.49.42l-.38 2.650c-.61.25-1.170.59-1.690.98l-2.490-1c-.23-.09-.49 0-.61.22l-2 3.460c-.13.22-.07.49.12.64l2.110 1.650c-.04.32-.07.65-.07.98s.03.66.07.98l-2.110 1.650c-.19.15-.24.42-.12.64l2 3.460c.12.22.39.3.61.22l2.490-1c.52.4 1.080.73 1.690.98l.38 2.650c.03.24.24.42.49.42h4c.25 0 .46-.18.49-.42l.38-2.650c.61-.25 1.170-.59 1.690-.98l2.490 1c.23.09.49 0 .61-.22l2-3.460c.12-.22.07-.49-.12-.64l-2.110-1.650zM12 15.500c-1.930 0-3.500-1.570-3.500-3.500s1.570-3.500 3.500-3.500 3.500 1.570 3.500 3.500-1.570 3.500-3.500 3.500z" /></svg>
            </IconButton>
            <IconButton $w={24} aria-label="Exit full screen">
              <svg width="22" height="22" fill="none" stroke="currentColor" strokeWidth="3"><path d="M21 1L14 8M13 2V9H20M1 21L8 14M2 13H9V20" /></svg>
            </IconButton>
          </PlayerRight>
        </Controls>
      </Player>
    </Screen>
  );
}
